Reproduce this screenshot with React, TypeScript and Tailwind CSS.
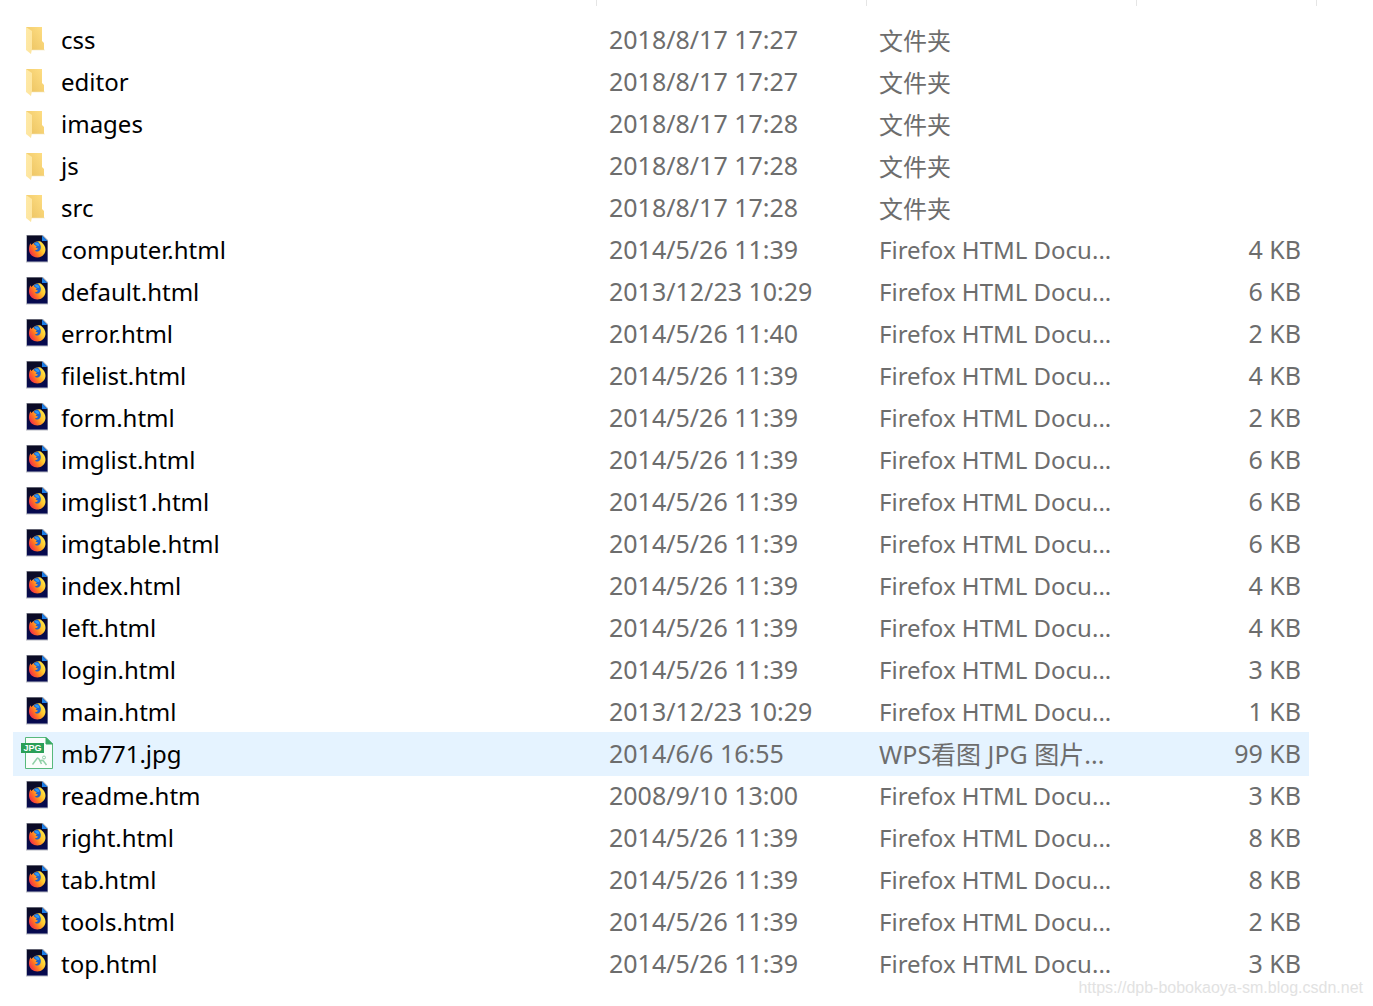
import React from "react";

type Kind = "folder" | "firefox" | "jpg";
type Entry = { name: string; date: string; kind: Kind; size?: string };

const entries: Entry[] = [
  { name: "css", date: "2018/8/17 17:27", kind: "folder" },
  { name: "editor", date: "2018/8/17 17:27", kind: "folder" },
  { name: "images", date: "2018/8/17 17:28", kind: "folder" },
  { name: "js", date: "2018/8/17 17:28", kind: "folder" },
  { name: "src", date: "2018/8/17 17:28", kind: "folder" },
  { name: "computer.html", date: "2014/5/26 11:39", kind: "firefox", size: "4 KB" },
  { name: "default.html", date: "2013/12/23 10:29", kind: "firefox", size: "6 KB" },
  { name: "error.html", date: "2014/5/26 11:40", kind: "firefox", size: "2 KB" },
  { name: "filelist.html", date: "2014/5/26 11:39", kind: "firefox", size: "4 KB" },
  { name: "form.html", date: "2014/5/26 11:39", kind: "firefox", size: "2 KB" },
  { name: "imglist.html", date: "2014/5/26 11:39", kind: "firefox", size: "6 KB" },
  { name: "imglist1.html", date: "2014/5/26 11:39", kind: "firefox", size: "6 KB" },
  { name: "imgtable.html", date: "2014/5/26 11:39", kind: "firefox", size: "6 KB" },
  { name: "index.html", date: "2014/5/26 11:39", kind: "firefox", size: "4 KB" },
  { name: "left.html", date: "2014/5/26 11:39", kind: "firefox", size: "4 KB" },
  { name: "login.html", date: "2014/5/26 11:39", kind: "firefox", size: "3 KB" },
  { name: "main.html", date: "2013/12/23 10:29", kind: "firefox", size: "1 KB" },
  { name: "mb771.jpg", date: "2014/6/6 16:55", kind: "jpg", size: "99 KB" },
  { name: "readme.htm", date: "2008/9/10 13:00", kind: "firefox", size: "3 KB" },
  { name: "right.html", date: "2014/5/26 11:39", kind: "firefox", size: "8 KB" },
  { name: "tab.html", date: "2014/5/26 11:39", kind: "firefox", size: "8 KB" },
  { name: "tools.html", date: "2014/5/26 11:39", kind: "firefox", size: "2 KB" },
  { name: "top.html", date: "2014/5/26 11:39", kind: "firefox", size: "3 KB" },
];

const typeNames: Record<Kind, string> = {
  folder: "文件夹",
  firefox: "Firefox HTML Docu...",
  jpg: "WPS看图 JPG 图片...",
};

const typeCellClasses: Record<Kind, string> = {
  folder: "p-0 pt-0.5 pl-3 text-[24px]",
  firefox: "p-0 pl-3 text-[24px]",
  jpg: "p-0 pl-3",
};

function Gradients() {
  return (
    <svg width="0" height="0" className="absolute" aria-hidden="true">
      <defs>
        <linearGradient id="folderBack" x1="0" y1="1" x2="1" y2="0">
          <stop offset="0" stopColor="#e9bf5c" />
          <stop offset="1" stopColor="#ffdf85" />
        </linearGradient>
        <linearGradient id="folderFront" x1="0" y1="0" x2="1" y2="1">
          <stop offset="0" stopColor="#ffeaa8" />
          <stop offset="1" stopColor="#fde49d" />
        </linearGradient>
        <linearGradient id="page" x1="0" y1="0" x2="0" y2="1">
          <stop offset="0" stopColor="#0b0b22" />
          <stop offset="1" stopColor="#060a52" />
        </linearGradient>
        <linearGradient id="flame" x1="1" y1="0.2" x2="0" y2="0.8">
          <stop offset="0" stopColor="#fff04a" />
          <stop offset="0.35" stopColor="#ffc42e" />
          <stop offset="0.65" stopColor="#ff7420" />
          <stop offset="1" stopColor="#ee1d55" />
        </linearGradient>
      </defs>
    </svg>
  );
}

function FolderIcon() {
  return (
    <svg width="32" height="32" viewBox="0 0 32 32" aria-hidden="true">
      <path d="M5 4H21V18L23 20V27H10V31Z" fill="url(#folderBack)" />
      <path d="M5 4L11 8V26L10 31L5 27Z" fill="url(#folderFront)" />
      <path d="M11 27H24" stroke="#f3e6bd" strokeWidth="0.6" />
    </svg>
  );
}

function FirefoxIcon() {
  return (
    <svg width="32" height="32" viewBox="0 0 32 32" aria-hidden="true">
      <path d="M5 2H22L27 7V29.500H5Z" fill="#b9bcc4" />
      <path d="M6 2.500H21L26.500 8V28.500H6Z" fill="url(#page)" />
      <path d="M21 2.500V8H26.500Z" fill="#1c7fe8" />
      <path
        d="M9.300 10.200L10.400 12C12 10.500 14 8.500 16.500 8.500C18 8 20 8.300 20.800 9.600C23 11.500 24.600 14 24.500 17C24.200 21.200 20.800 24.500 16.400 24.500C12 24.500 8.200 21.400 8 17C7.900 14.300 8.600 12 9.300 10.200Z"
        fill="url(#flame)"
      />
      <path
        d="M12.500 10.800C13.500 9.300 15 8.500 17 8.700C18.200 9.800 19.600 11.400 19.800 13.500C20 15.800 19.200 17.600 17.600 18.300C16.200 18.900 14.600 18.500 13.900 17.400C15 17.400 15.800 16.700 16.900 16.100C17 15.100 15.500 14.900 14.600 14.700L15.800 13.100C14.500 12.900 13.300 12 12.500 10.800Z"
        fill="#1b62cf"
      />
      <path d="M13.500 10.600C15 9.300 16.500 9.500 17.500 10.500C18.500 11.500 18.500 12 18 13L16 12.800Z" fill="#2b9df5" />
    </svg>
  );
}

function JpgIcon() {
  return (
    <svg width="32" height="32" viewBox="0 0 32 32" aria-hidden="true">
      <path d="M4.500 0.500H25L31.500 7V31.500H4.500Z" fill="#fafdfb" stroke="#58b97c" />
      <path d="M25 0.500V7H31.500Z" fill="#38a962" stroke="#38a962" />
      <rect x="0" y="6" width="23" height="10" fill="#2a9f57" />
      <text
        x="11.500"
        y="14"
        textAnchor="middle"
        fontSize="9"
        fontWeight="700"
        fill="#fff"
        fontFamily="Liberation Sans, sans-serif"
      >
        JPG
      </text>
      <path
        d="M11.500 27.500L16 21.500Q17 20.500 18 22L20.500 27M18.500 24.500Q21 22.500 22.500 24L25.500 28"
        fill="none"
        stroke="#8fd0a6"
        strokeWidth="1.500"
      />
      <circle cx="23" cy="20.500" r="1.500" fill="none" stroke="#8fd0a6" />
    </svg>
  );
}

function FileIcon({ kind }: { kind: Kind }) {
  if (kind === "folder") return <FolderIcon />;
  if (kind === "firefox") return <FirefoxIcon />;
  return <JpgIcon />;
}

function FileRow({ entry }: { entry: Entry }) {
  const highlighted = entry.kind === "jpg";
  return (
    <tr className={highlighted ? "bg-[#e5f3ff] shadow-[0_0_0_1px_#e5f3ff]" : ""}>
      <td className="p-0 pb-0.5 pl-[7px] text-[24px] text-black">
        <div className="flex items-center gap-2">
          <FileIcon kind={entry.kind} />
          <span className="pt-0.5 leading-[38px]">{entry.name}</span>
        </div>
      </td>
      <td className="p-0 pb-0.5 pl-3">{entry.date}</td>
      <td className={typeCellClasses[entry.kind]}>{typeNames[entry.kind]}</td>
      <td className="p-0 pr-[7px] pb-0.5 text-right">{entry.size}</td>
    </tr>
  );
}

export default function App() {
  return (
    <main className="relative min-h-screen bg-white font-['Noto_Sans','Noto_Sans_CJK_SC',sans-serif] text-[25px] leading-10 whitespace-nowrap text-[#6d6d6d]">
      <Gradients />
      <div className="mb-[13px] flex h-[6px] pr-14" aria-hidden="true">
        <div className="flex-1 border-r border-[#e5e5e5]" />
        <div className="w-[270px] border-r border-[#e5e5e5]" />
        <div className="w-[270px] border-r border-[#e5e5e5]" />
        <div className="w-[180px] border-r border-[#e5e5e5]" />
      </div>
      <div className="pr-[65px] pb-5 pl-[14px]">
        <table className="w-full table-fixed border-collapse" aria-label="Files">
          <colgroup>
            <col />
            <col className="w-[270px]" />
            <col className="w-[270px]" />
            <col className="w-[171px]" />
          </colgroup>
          <tbody>
            {entries.map((entry) => (
              <FileRow key={entry.name} entry={entry} />
            ))}
          </tbody>
        </table>
      </div>
      <p className="absolute right-[10px] bottom-[8px] font-['Liberation_Sans',sans-serif] text-[16px] leading-5 text-[#e2e2e2]">
        https://dpb-bobokaoya-sm.blog.csdn.net
      </p>
    </main>
  );
}
